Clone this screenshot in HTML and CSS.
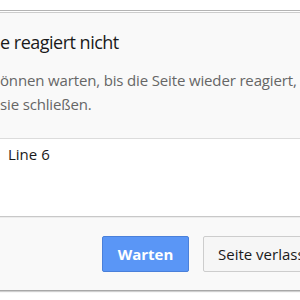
FILE: index.html
```html
<html lang="de">
	<head>
		<meta charset="UTF-8" />
		<title>Seite reagiert nicht</title>
		<link rel="stylesheet" href="styles.css">
	</head>
	<body>
		<div class="dialog">
			<div class="header">
				<div class="title">e reagiert nicht</div>
				<div class="message">önnen warten, bis die Seite wieder reagiert,<br />sie schließen.</div>
			</div>
			<div class="content">
				<div class="item">Line 6</div>
			</div>
			<div class="footer">
				<div class="button primary">Warten</div>
				<div class="button">Seite verlassen</div>
			</div>
		</div>
	</body>
</html>
```

FILE: styles.css
```css
* {
	margin: 0;
	padding: 0;
	box-sizing: border-box;
}
body {
	background-color: #fff;
	padding-top: 10px;
	font-family: "Open Sans", "Noto Sans", sans-serif;
	overflow: hidden;
}

.dialog {
	width: 340px;
	border-top: 1px solid #b4b4b4;
	border-bottom: 1px solid #a8a8a8;
	box-shadow: 0 1px 1px #cfcfcf;
	background-color: #f9f9f9;
}

.header {
	border-top: 1px solid #fff;
	box-shadow: inset 0 1px 0 #cdcdcd;
	padding: 18px 0 22px 0;
	border-bottom: 1px solid #dcdcdc;
}

.title {
	font-size: 18px;
	line-height: 24px;
	letter-spacing: -0.5px;
	color: #1a1a1a;
}

.message {
	margin-top: 14px;
	font-size: 15px;
	line-height: 24px;
	letter-spacing: -0.15px;
	color: #666;
	white-space: nowrap;
}

.content {
	height: 78px;
	padding: 4px 8px;
	background-color: #fff;
	border-bottom: 1px solid #c8c8c8;
	font-size: 15px;
	line-height: 22px;
	color: #1a1a1a;
}

.footer {
	display: flex;
	gap: 14px;
	padding: 18px 0 18px 102px;
	border-top: 1px solid #ececec;
}

.button {
	height: 36px;
	padding: 0 14px;
	border: 1px solid #cdcdcd;
	border-radius: 2px;
	background-color: #f6f6f6;
	font-size: 15px;
	line-height: 34px;
	color: #1a1a1a;
	white-space: nowrap;
}

.button.primary {
	width: 87px;
	text-align: center;
	padding: 0;
	border-color: #4a80da;
	background-color: #5a96f6;
	color: #fff;
	font-weight: bold;
}
```
